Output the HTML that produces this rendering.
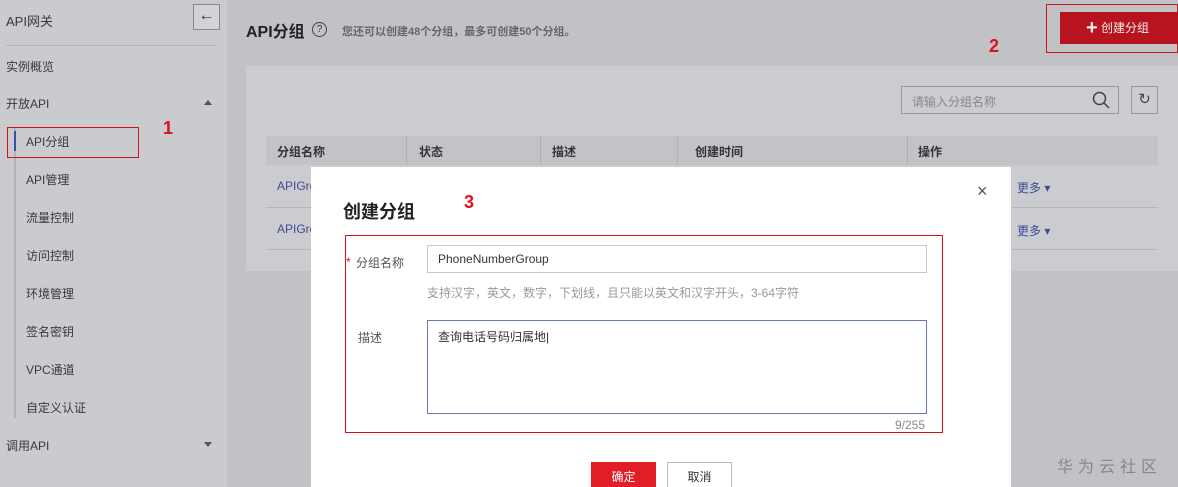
<!DOCTYPE html>
<html><head><meta charset="utf-8"><style>
*{box-sizing:border-box;margin:0;padding:0}
html,body{width:1178px;height:487px;overflow:hidden}
body{position:relative;background:#c1c2c6;font-family:"Liberation Sans","Noto Sans CJK SC",sans-serif;font-size:12px;color:#333}
.a{position:absolute}
.side{left:0;top:0;width:227px;height:487px;background:#cacbce}
.t{position:absolute;font-size:12px;color:#3a3a3a}
.card{left:246px;top:66px;width:932px;height:205px;background:#cbccd0}
.red{border:1px solid #d3101b}
.num{position:absolute;color:#e0101c !important;font-weight:bold;font-size:18px}
.modal{left:311px;top:167px;width:700px;height:320px;background:#fff}
.inp{position:absolute;border:1px solid #c8c8c8;background:#fff;font-size:12px;padding-left:10px}
</style></head><body>
<div class="a side">
<div class="t" style="left:6px;top:11px;font-size:13px">API网关</div>
<div class="a" style="left:193px;top:4px;width:27px;height:26px;border:1px solid #888;background:#d2d3d6;text-align:center;font-size:16px;line-height:22px;font-weight:bold">&#8592;</div>
<div class="a" style="left:6px;top:45px;width:211px;height:1px;background:#b5b6ba"></div>
<div class="t" style="left:6px;top:58px">实例概览</div>
<div class="t" style="left:6px;top:95px">开放API</div>
<div class="a" style="left:204px;top:100px;border:4px solid transparent;border-bottom:5px solid #555;border-top:0"></div>
<div class="a" style="left:14px;top:128px;width:2px;height:290px;background:#b2b3b7"></div>
<div class="a" style="left:14px;top:131px;width:2px;height:20px;background:#3b4fa0"></div>
<div class="t" style="left:26px;top:133px">API分组</div>
<div class="a red" style="left:7px;top:127px;width:132px;height:31px"></div>
<div class="num" style="left:163px;top:118px">1</div>
<div class="t" style="left:26px;top:171px">API管理</div>
<div class="t" style="left:26px;top:209px">流量控制</div>
<div class="t" style="left:26px;top:247px">访问控制</div>
<div class="t" style="left:26px;top:285px">环境管理</div>
<div class="t" style="left:26px;top:323px">签名密钥</div>
<div class="t" style="left:26px;top:361px">VPC通道</div>
<div class="t" style="left:26px;top:399px">自定义认证</div>
<div class="t" style="left:6px;top:437px">调用API</div>
<div class="a" style="left:204px;top:442px;border:4px solid transparent;border-top:5px solid #555;border-bottom:0"></div>
</div>
<div class="a" style="left:246px;top:18px;font-size:16px;font-weight:bold;color:#222">API分组</div>
<div class="a" style="left:312px;top:22px;width:15px;height:15px;border:1px solid #444;border-radius:50%;font-size:10px;text-align:center;line-height:13px">?</div>
<div class="a" style="left:342px;top:23px;font-size:11px;color:#666;font-weight:bold">您还可以创建48个分组，最多可创建50个分组。</div>
<div class="a red" style="left:1046px;top:4px;width:132px;height:49px"></div>
<div class="a" style="left:1060px;top:12px;width:118px;height:32px;background:#b8141f;color:#eee;font-size:12px;line-height:32px;padding-left:26px"><span style="font-size:20px;font-weight:bold;vertical-align:-2px">+</span> 创建分组</div>
<div class="num" style="left:989px;top:36px">2</div>
<div class="a card">
<div class="a" style="left:655px;top:20px;width:218px;height:28px;border:1px solid #999;color:#888;padding:6px 10px;font-size:12px">请输入分组名称</div>
<svg class="a" style="left:846px;top:25px" width="18" height="18"><circle cx="7.5" cy="7.5" r="6" fill="none" stroke="#444" stroke-width="1.5"/><path d="M12 12l5 5" stroke="#444" stroke-width="1.5"/></svg>
<div class="a" style="left:885px;top:20px;width:27px;height:28px;border:1px solid #999;text-align:center;line-height:26px;font-size:15px;color:#444">&#8635;</div>
<div class="a" style="left:20px;top:70px;width:892px;height:29px;background:#c2c3c7;font-size:12px;color:#333;font-weight:bold">
<span class="a" style="left:11px;top:7px">分组名称</span><span class="a" style="left:140px;top:0;width:1px;height:29px;background:#b0b1b5"></span>
<span class="a" style="left:153px;top:7px">状态</span><span class="a" style="left:274px;top:0;width:1px;height:29px;background:#b0b1b5"></span>
<span class="a" style="left:286px;top:7px">描述</span><span class="a" style="left:411px;top:0;width:1px;height:29px;background:#b0b1b5"></span>
<span class="a" style="left:429px;top:7px">创建时间</span><span class="a" style="left:641px;top:0;width:1px;height:29px;background:#b0b1b5"></span>
<span class="a" style="left:652px;top:7px">操作</span></div>
<div class="a" style="left:31px;top:113px;color:#3c4c95">APIGro</div>
<div class="a" style="left:31px;top:156px;color:#3c4c95">APIGro</div>
<div class="a" style="left:20px;top:141px;width:892px;height:1px;background:#b5b6ba"></div>
<div class="a" style="left:20px;top:183px;width:892px;height:1px;background:#b5b6ba"></div>
<div class="a" style="left:771px;top:113px;color:#3c4c95">更多 ▾</div>
<div class="a" style="left:771px;top:156px;color:#3c4c95">更多 ▾</div>
</div>
<div class="a" style="left:1057px;top:453px;font-size:16px;color:#888;letter-spacing:5px">华为云社区</div>
<div class="a modal">
<div class="a" style="left:32px;top:31px;font-size:18px;font-weight:bold;color:#222">创建分组</div>
<div class="num" style="left:153px;top:25px">3</div>
<div class="a" style="left:666px;top:14px;font-size:18px;color:#555">×</div>
<div class="a red" style="left:34px;top:68px;width:598px;height:198px"></div>
<div class="a" style="left:35px;top:88px;color:#e0101c">*</div>
<div class="a" style="left:45px;top:87px;color:#555">分组名称</div>
<div class="inp" style="left:116px;top:78px;width:500px;height:28px;line-height:26px">PhoneNumberGroup</div>
<div class="a" style="left:116px;top:117px;color:#999">支持汉字，英文，数字，下划线，且只能以英文和汉字开头，3-64字符</div>
<div class="a" style="left:47px;top:162px;color:#555">描述</div>
<div class="inp" style="left:116px;top:153px;width:500px;height:94px;border-color:#6677bb;padding-top:7px">查询电话号码归属地|</div>
<div class="a" style="left:584px;top:251px;color:#888">9/255</div>
<div class="a" style="left:280px;top:295px;width:65px;height:30px;background:#e11d26;color:#fff;text-align:center;line-height:30px">确定</div>
<div class="a" style="left:356px;top:295px;width:65px;height:30px;border:1px solid #bbb;text-align:center;line-height:28px">取消</div>
</div>
</body></html>
